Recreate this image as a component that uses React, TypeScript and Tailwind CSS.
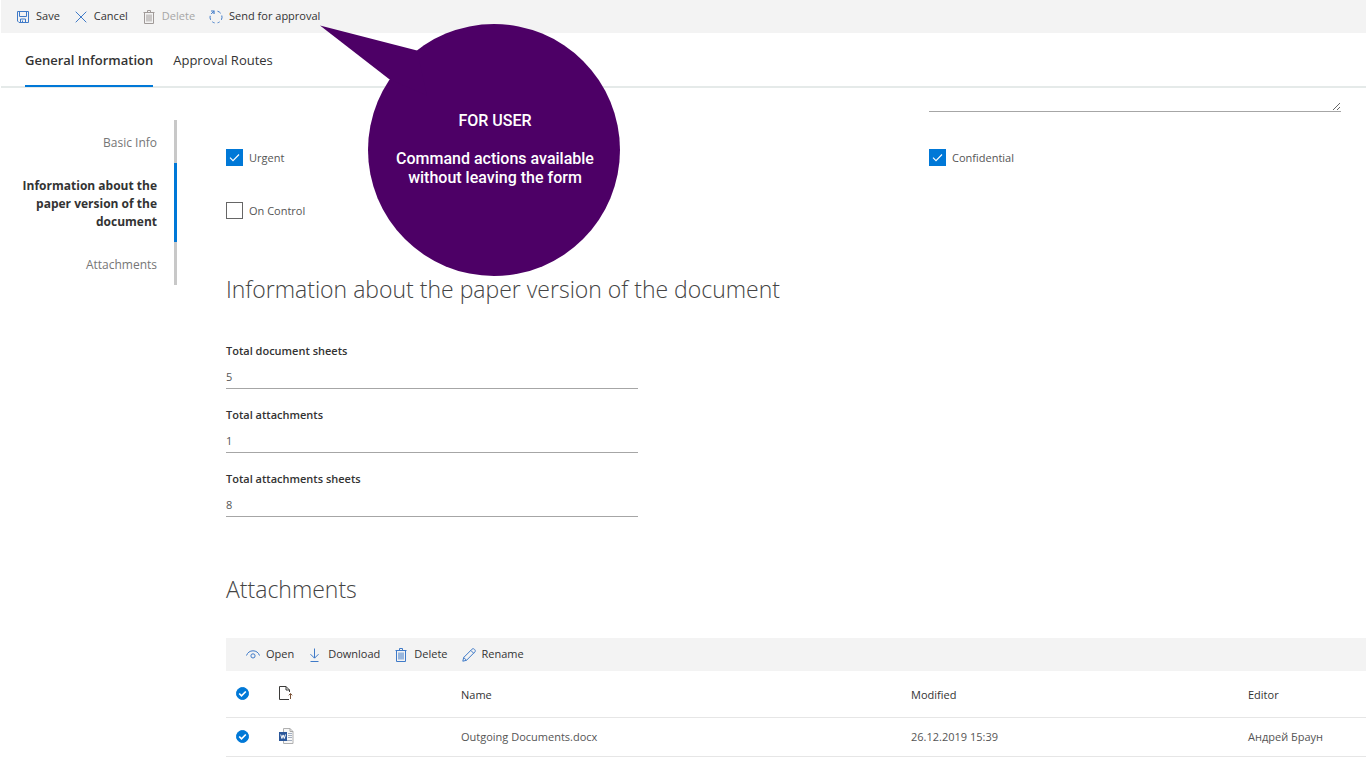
import { useState } from 'react'
import type { ReactNode } from 'react'
import clsx from 'clsx'

interface IconProps {
  className?: string
}

function SaveIcon({ className }: IconProps) {
  return (
    <svg viewBox="0 0 14 14" className={className} fill="none" stroke="currentColor">
      <path d="M1.5 1.5h11v11h-9.5l-1.5-1.5z" />
      <path d="M3.5 1.5v5h7v-5M4.5 12.5v-3.5h5v3.5M6.5 10.5v2" />
    </svg>
  )
}

function CancelIcon({ className }: IconProps) {
  return (
    <svg viewBox="0 0 14 14" className={className} fill="none" stroke="currentColor">
      <path d="M1.7 1.7l10.6 10.6M12.3 1.7L1.7 12.3" />
    </svg>
  )
}

function TrashIcon({ className }: IconProps) {
  return (
    <svg viewBox="0 0 14 14" className={className} fill="none" stroke="currentColor">
      <path d="M1.5 2.5h11M5.5 2.5v-2h3v2M2.5 2.5v11h9v-11" />
      <path d="M5 4.5v7M7 4.5v7M9 4.5v7" />
    </svg>
  )
}

function SendIcon({ className }: IconProps) {
  return (
    <svg viewBox="0 0 14 14" className={className} fill="none" stroke="currentColor">
      <path d="M8.5 1.2a6 6 0 0 1 3.2 2.1M12.8 5.5a6 6 0 0 1-.4 4.3M10.6 11.9a6 6 0 0 1-2 .9M5.6 12.9a6 6 0 0 1-2.3-1.1M1.6 9.8a6 6 0 0 1-.4-4M2.2 4l2.4-2.6" />
      <path d="M2 1h3v3" strokeWidth="1.2" />
    </svg>
  )
}

function EyeIcon({ className }: IconProps) {
  return (
    <svg viewBox="0 0 14 14" className={className} fill="none" stroke="currentColor">
      <path d="M.5 7.5c1-3 3.5-4.7 6.5-4.7s5.5 1.7 6.5 4.7" />
      <circle cx="7" cy="7.9" r="2.1" />
    </svg>
  )
}

function DownloadIcon({ className }: IconProps) {
  return (
    <svg viewBox="0 0 14 14" className={className} fill="none" stroke="currentColor">
      <path d="M6.5 .5v9.5M2.5 6.2l4 4 4-4M2.5 13.5h8" />
    </svg>
  )
}

function PencilIcon({ className }: IconProps) {
  return (
    <svg viewBox="0 0 14 14" className={className} fill="none" stroke="currentColor">
      <path d="M.8 13.2l.9-3.7 8.3-8.3c.7-.7 1.7-.6 2.3 0l.5.5c.6.6.7 1.6 0 2.3l-8.3 8.3zM8.8 2.4l2.8 2.8M1.7 9.5l2.8 2.8" />
    </svg>
  )
}

function FileTypeIcon() {
  return (
    <svg viewBox="0 0 14 15" className="h-[15px] w-[14px]" fill="none" stroke="#3b3a39">
      <path d="M10.5 6v-2l-3.5-3.5h-6.5v13h9.5" />
      <path d="M7 .5v3.5h3.5" />
      <path d="M11.5 13v-5.5M9.8 9.3l1.7-1.7 1.7 1.7" stroke="#7a5236" />
    </svg>
  )
}

function WordIcon() {
  return (
    <svg viewBox="0 0 15 16" className="h-4 w-[15px]">
      <path d="M4.5.5h6.5l3 3v12h-9.5z" fill="#f7f7f7" stroke="#b0b0b0" />
      <path d="M11 .5v3h3" fill="none" stroke="#a6a6a6" />
      <path d="M9 5.5h4M9 7.5h4M9 9.5h4M6 12.5h7" stroke="#a3aebf" />
      <path d="M0 4h8v9h-8z" fill="#2b579a" />
      <path d="M1.7 6.5l1.2 4 1.2-3.6 1.2 3.6 1.2-4" fill="none" stroke="#fff" />
    </svg>
  )
}

interface CommandProps {
  icon: ReactNode
  label: string
  disabled?: boolean
}

function Command({ icon, label, disabled }: CommandProps) {
  return (
    <button
      type="button"
      disabled={disabled}
      className={clsx(
        'flex items-center gap-1.5 text-[11px]',
        disabled ? 'text-[#a6a6a6]' : 'text-[#333333]',
      )}
    >
      <span className={disabled ? 'text-[#a09a98]' : 'text-[#3f7ac8]'}>{icon}</span>
      {label}
    </button>
  )
}

interface CheckFieldProps {
  label: string
  defaultChecked?: boolean
}

function CheckField({ label, defaultChecked }: CheckFieldProps) {
  return (
    <label className="flex w-fit items-center gap-1.5 text-[11px] leading-[17px] text-[#555555]">
      <span className="grid">
        <input
          type="checkbox"
          defaultChecked={defaultChecked}
          className="peer col-start-1 row-start-1 size-[17px] appearance-none border border-[#666666] bg-white checked:border-[#0078d7] checked:bg-[#0078d7]"
        />
        <svg
          viewBox="0 0 17 17"
          className="pointer-events-none invisible col-start-1 row-start-1 size-[17px] peer-checked:visible"
          fill="none"
          stroke="#fff"
          strokeWidth="1.1"
        >
          <path d="M4 8.7l3 3 6-6.2" />
        </svg>
      </span>
      {label}
    </label>
  )
}

function RowCheck({ label }: { label: string }) {
  return (
    <span className="grid w-fit">
      <input
        type="checkbox"
        defaultChecked
        aria-label={label}
        className="peer col-start-1 row-start-1 size-[13px] appearance-none rounded-full border border-[#a6a6a6] checked:border-[#0078d7] checked:bg-[#0078d7]"
      />
      <svg
        viewBox="0 0 13 13"
        className="pointer-events-none invisible col-start-1 row-start-1 size-[13px] peer-checked:visible"
        fill="none"
        stroke="#fff"
        strokeWidth="1.7"
      >
        <path d="M3.2 6.5l2.3 2.3 4.3-4.3" />
      </svg>
    </span>
  )
}

interface TextFieldProps {
  id: string
  label: string
  value: string
}

function TextField({ id, label, value }: TextFieldProps) {
  return (
    <div className="flex flex-col">
      <label htmlFor={id} className="text-[11px] leading-5 font-semibold text-[#333333]">
        {label}
      </label>
      <input
        id={id}
        defaultValue={value}
        className="h-7 w-full border-b border-[#a6a6a6] pt-1 text-[11px] text-[#555555] outline-none"
      />
    </div>
  )
}

const sections = ['Basic Info', 'Information about the paper version of the document', 'Attachments']

const sheets = [
  { id: 'document-sheets', label: 'Total document sheets', value: '5' },
  { id: 'attachments', label: 'Total attachments', value: '1' },
  { id: 'attachments-sheets', label: 'Total attachments sheets', value: '8' },
]

const files = [{ name: 'Outgoing Documents.docx', modified: '26.12.2019 15:39', editor: 'Андрей Браун' }]

function Callout() {
  return (
    <aside className="absolute top-6 left-80 z-10 h-[252px] w-[300px]">
      <svg viewBox="0 0 300 252" className="h-full w-full" fill="#4d0066">
        <circle cx="174" cy="126" r="126" />
        <path d="M0 1.5l97 25 10 45-38-16.5z" />
      </svg>
      <div className="absolute top-[87px] right-0 w-[252px] pl-0.5 text-center font-[Roboto,sans-serif] text-base leading-[19px] font-medium text-white">
        <p className="mb-[19px]">FOR USER</p>
        <p>
          Command actions available
          <br />
          without leaving the form
        </p>
      </div>
    </aside>
  )
}

export default function App() {
  const [tab, setTab] = useState('General Information')
  const [section, setSection] = useState(sections[1])

  return (
    <div className="relative min-h-screen overflow-hidden bg-white pl-px font-['Open_Sans','Noto_Sans',sans-serif]">
      <div className="flex h-[33px] items-center gap-3.5 bg-[#f3f3f3] px-[15px]">
        <Command icon={<SaveIcon className="size-3.5" />} label="Save" />
        <Command icon={<CancelIcon className="size-3.5" />} label="Cancel" />
        <Command icon={<TrashIcon className="size-3.5" />} label="Delete" disabled />
        <Command icon={<SendIcon className="size-3.5" />} label="Send for approval" />
      </div>

      <div role="tablist" className="flex h-[55px] gap-5 border-b-2 border-[#e5eae9] px-6">
        {['General Information', 'Approval Routes'].map((name) => (
          <button
            key={name}
            type="button"
            role="tab"
            aria-selected={tab === name}
            onClick={() => setTab(name)}
            className={clsx(
              'h-[54px] border-b-2 pt-1 text-[13px] text-[#333333]',
              tab === name ? 'border-[#0078d7] font-semibold' : 'border-transparent',
            )}
          >
            {name}
          </button>
        ))}
      </div>

      <div className="flex">
        <nav className="mt-8 mr-[49px] flex w-[176px] shrink-0 flex-col self-start">
          {sections.map((name) => (
            <button
              key={name}
              type="button"
              onClick={() => setSection(name)}
              className={clsx(
                'border-r-3 pt-3.5 pr-[17px] pb-[11px] pl-3 text-right text-xs leading-[18px]',
                section === name
                  ? 'border-[#0078d7] font-bold text-[#333333]'
                  : 'border-[#c8c8c8] text-[#767676]',
              )}
            >
              {name}
            </button>
          ))}
        </nav>

        <main className="min-w-0 flex-1">
          <div className="grid grid-cols-[703fr_437fr]">
            <textarea
              aria-label="Comment"
              className="col-start-2 mr-[25px] block h-6 border-b border-[#a6a6a6] outline-none"
            />
          </div>
          <div className="mt-[37px] grid grid-cols-[703fr_437fr] gap-y-9">
            <CheckField label="Urgent" defaultChecked />
            <CheckField label="Confidential" defaultChecked />
            <CheckField label="On Control" />
          </div>

          <h2 className="mt-[52px] text-[23px] leading-9 font-light text-[#444444]">
            Information about the paper version of the document
          </h2>
          <div className="mt-[34px] grid grid-cols-[412fr_728fr]">
            <div className="flex flex-col gap-4">
              {sheets.map((field) => (
                <TextField key={field.id} {...field} />
              ))}
            </div>
          </div>

          <h2 className="mt-[54px] text-[23px] leading-9 font-light text-[#444444]">Attachments</h2>
          <div className="mt-[31px] flex h-[33px] items-center gap-3.5 bg-[#f3f3f3] px-5">
            <Command icon={<EyeIcon className="size-3.5" />} label="Open" />
            <Command icon={<DownloadIcon className="size-3.5" />} label="Download" />
            <Command icon={<TrashIcon className="size-3.5" />} label="Delete" />
            <Command icon={<PencilIcon className="size-3.5" />} label="Rename" />
          </div>
          <table className="w-full table-fixed text-left text-[11px] text-[#555555]">
            <thead>
              <tr className="h-[46px] border-b border-[#e6e6e6] text-[#333333]">
                <th className="w-[51px] pl-2.5">
                  <RowCheck label="Select all files" />
                </th>
                <th className="w-[184px] pl-0.5" aria-label="File type">
                  <FileTypeIcon />
                </th>
                <th className="pt-0.5 font-normal">Name</th>
                <th className="w-[337px] pt-0.5 font-normal">Modified</th>
                <th className="w-[118px] pt-0.5 font-normal">Editor</th>
              </tr>
            </thead>
            <tbody>
              {files.map((file) => (
                <tr key={file.name} className="h-[39px] border-b border-[#e6e6e6]">
                  <td className="pl-2.5">
                    <RowCheck label={file.name} />
                  </td>
                  <td className="pb-0.5 pl-0.5">
                    <WordIcon />
                  </td>
                  <td className="pt-0.5">{file.name}</td>
                  <td className="pt-0.5">{file.modified}</td>
                  <td className="pt-0.5">{file.editor}</td>
                </tr>
              ))}
            </tbody>
          </table>
        </main>
      </div>

      <Callout />
    </div>
  )
}
